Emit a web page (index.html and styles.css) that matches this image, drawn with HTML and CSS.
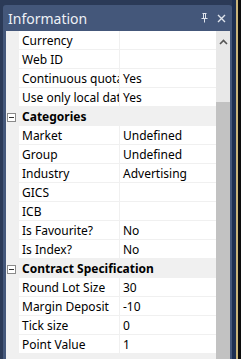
FILE: index.html
```html
<!DOCTYPE html>
<html lang="en">
<head>
    <meta charset="UTF-8">
    <title>Information</title>
    <link rel="stylesheet" href="styles.css">
</head>
<body>
    <div class="screen">
        <div class="panel">
            <div class="titlebar">
                <span class="title">Information</span>
                <span class="tools">
                    <svg width="7" height="10" viewBox="0 0 7 10"><path d="M1.5 0.5h4M2.5 0.5v5M4.5 0.5v5M0.5 5.5h6M3.5 5.5v4" stroke="#dfe4ec" fill="none"/></svg>
                    <svg width="9" height="9" viewBox="0 0 9 9"><path d="M1 1l7 7M8 1l-7 7" stroke="#dfe4ec" stroke-width="1.4" fill="none"/></svg>
                </span>
            </div>
            <div class="pane">
                <div class="grid">
                    <div class="row"><span class="gutter"></span><span class="name">Currency</span><span class="value"></span></div>
                    <div class="row"><span class="gutter"></span><span class="name">Web ID</span><span class="value"></span></div>
                    <div class="row"><span class="gutter"></span><span class="name">Continuous quotation</span><span class="value">Yes</span></div>
                    <div class="row"><span class="gutter"></span><span class="name">Use only local data</span><span class="value">Yes</span></div>
                    <div class="row category"><span class="gutter"><i class="toggle"></i></span><span class="cat-name">Categories</span></div>
                    <div class="row"><span class="gutter"></span><span class="name">Market</span><span class="value">Undefined</span></div>
                    <div class="row"><span class="gutter"></span><span class="name">Group</span><span class="value">Undefined</span></div>
                    <div class="row"><span class="gutter"></span><span class="name">Industry</span><span class="value">Advertising</span></div>
                    <div class="row"><span class="gutter"></span><span class="name">GICS</span><span class="value"></span></div>
                    <div class="row"><span class="gutter"></span><span class="name">ICB</span><span class="value"></span></div>
                    <div class="row"><span class="gutter"></span><span class="name">Is Favourite?</span><span class="value">No</span></div>
                    <div class="row"><span class="gutter"></span><span class="name">Is Index?</span><span class="value">No</span></div>
                    <div class="row category"><span class="gutter"><i class="toggle"></i></span><span class="cat-name">Contract Specification</span></div>
                    <div class="row"><span class="gutter"></span><span class="name">Round Lot Size</span><span class="value">30</span></div>
                    <div class="row"><span class="gutter"></span><span class="name">Margin Deposit</span><span class="value">-10</span></div>
                    <div class="row"><span class="gutter"></span><span class="name">Tick size</span><span class="value">0</span></div>
                    <div class="row"><span class="gutter"></span><span class="name">Point Value</span><span class="value">1</span></div>
                </div>
                <div class="scrollbar">
                    <div class="arrow">
                        <svg width="9" height="6" viewBox="0 0 9 6"><path d="M1 5l3.5-3.5L8 5" stroke="#555" stroke-width="1.6" fill="none"/></svg>
                    </div>
                    <div class="track"></div>
                    <div class="thumb"></div>
                </div>
            </div>
        </div>
        <div class="edge"></div>
    </div>
</body>
</html>
```

FILE: styles.css
```css
body {
    margin: 0;
    padding: 0;
    background: #2b3a57;
    font-family: "Noto Sans", "Open Sans", Arial, sans-serif;
    overflow: hidden;
}
.screen {
    display: flex;
    width: 241px;
    height: 359px;
    overflow: hidden;
    background: #2b3a57;
}
.panel {
    width: 229px;
    margin: 5px 0 0 3px;
    display: flex;
    flex-direction: column;
}
.titlebar {
    height: 26px;
    background: #44577a;
    border-radius: 3px 3px 0 0;
    display: flex;
    align-items: center;
    justify-content: space-between;
    padding: 0 5px 0 5px;
}
.title {
    color: #eef1f6;
    font-size: 14px;
    line-height: 26px;
    padding-top: 1px;
}
.tools {
    display: flex;
    align-items: center;
    gap: 9px;
    padding-right: 1px;
}
.tools svg {
    display: block;
}
.pane {
    flex: 1;
    display: flex;
    background: #44577a;
    padding: 0 2px 0 3px;
}
.grid {
    width: 210px;
    background: #f0f0f0;
}
.row {
    display: flex;
    height: 18px;
    border-bottom: 1px solid #f0f0f0;
    background: #fff;
    font-size: 12px;
    color: #000;
}
.gutter {
    width: 13px;
    flex: none;
    background: #f0f0f0;
    display: flex;
    align-items: center;
}
.name, .value, .cat-name {
    padding-top: 2px;
    line-height: 16px;
    white-space: nowrap;
    overflow: hidden;
}
.name {
    width: 97px;
    flex: none;
    padding-left: 3px;
    border-right: 1px solid #f0f0f0;
}
.value {
    flex: 1;
    padding-left: 3px;
}
.category {
    background: #f0f0f0;
}
.cat-name {
    padding-left: 3px;
    font-weight: bold;
}
.toggle {
    display: block;
    position: relative;
    width: 7px;
    height: 7px;
    margin-left: 1px;
    margin-top: 2px;
    border: 1px solid #8a8a8a;
    background: #fff;
}
.toggle::after {
    content: "";
    position: absolute;
    left: 1px;
    top: 3px;
    width: 5px;
    height: 1px;
    background: #333;
}
.scrollbar {
    width: 14px;
    display: flex;
    flex-direction: column;
    background: #e8e8e8;
}
.arrow {
    height: 22px;
    display: flex;
    align-items: center;
    justify-content: center;
}
.track {
    height: 49px;
}
.thumb {
    flex: 1;
    background: #c2c2c2;
}
.edge {
    width: 9px;
    background: linear-gradient(to right, #1e3052 0, #1e3052 4px, #c9b47a 4px, #c9b47a 6px, #0c0c0c 6px);
}
```
